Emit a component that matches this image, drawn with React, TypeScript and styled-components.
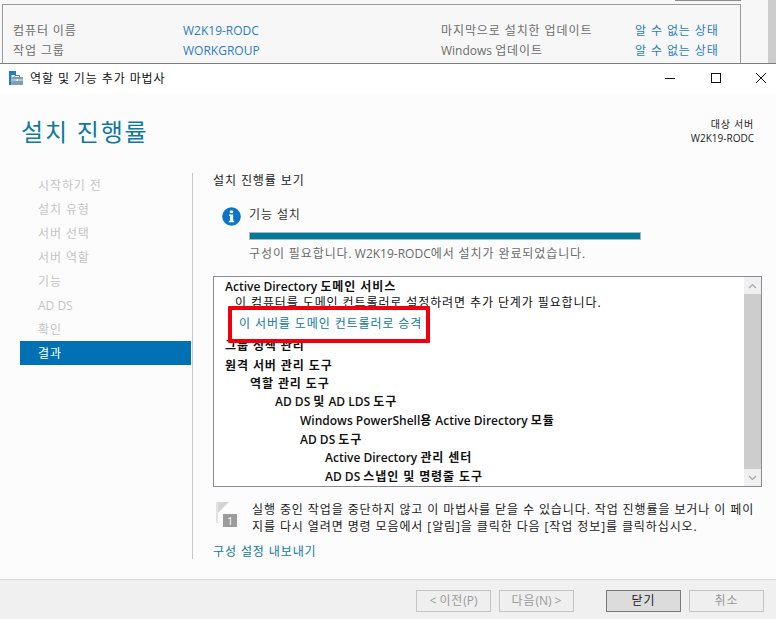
import styled, { createGlobalStyle } from 'styled-components'

const GlobalStyle = createGlobalStyle`
  html, body {
    margin: 0;
    padding: 0;
    background: #f7f7f7;
  }
  body {
    font-family: "Open Sans", "Noto Sans CJK KR", sans-serif;
    font-size: 12px;
    color: #1a1a1a;
  }
`

// hangul runs are set wider than the installed CJK font draws them
const Ko = styled.span`
  letter-spacing: 0.075em;
`

const T = ({ children }: { children: string }) => (
  <>
    {children.split(/([가-힣]+(?: [가-힣]+)*)/).map((part, i) =>
      i % 2 ? <Ko key={i}>{part}</Ko> : part,
    )}
  </>
)

const Page = styled.div`
  width: 776px;
  height: 619px;
  overflow: hidden;
  display: flex;
  flex-direction: column;
`

const Backdrop = styled.div`
  height: 63px;
  display: flex;
  background: #f7f7f7;
  border-bottom: 1px solid #7d7d7d;
  padding-left: 2px;
`

const BackdropPanel = styled.div`
  position: relative;
  width: 739px;
  margin-top: 4px;
  border: 1px solid #9a9a9a;
  border-bottom: none;
  display: grid;
  grid-template-columns: 170px 258px 194px 1fr;
  grid-auto-rows: 20px;
  padding: 16px 0 0 10px;
  box-sizing: border-box;

  &::before {
    content: '';
    position: absolute;
    top: -5px;
    right: -1px;
    width: 66px;
    height: 1px;
    background: #8c8c8c;
  }
`

const BackdropSpacer = styled.div`
  flex: 1;
`

const BackdropScroll = styled.div`
  width: 8px;
  background: #cdcdcd;
`

const InfoLabel = styled.span`
  color: #6d6d6d;
  line-height: 20px;
`

const InfoValue = styled.span`
  color: #2a7cc4;
  line-height: 20px;
`

const Wizard = styled.div`
  flex: 1;
  display: flex;
  flex-direction: column;
  background: #fcfcfc;
  min-height: 0;
`

const TitleBar = styled.div`
  height: 30px;
  box-sizing: border-box;
  padding: 0 0 2px 9px;
  background: #fff;
  display: flex;
  align-items: center;
`

const TitleText = styled.span`
  margin-left: 7px;
  color: #111;
  flex: 1;
`

const WindowControls = styled.div`
  display: flex;
  margin-right: -8px;
`

const WindowButton = styled.div`
  width: 45.5px;
  height: 28px;
  display: flex;
  align-items: center;
  justify-content: center;
`

const Header = styled.div`
  height: 79px;
  display: flex;
  justify-content: space-between;
  padding: 0 22px 0 21px;
`

const PageTitle = styled.h1`
  margin: 21px 0 0;
  font-size: 24px;
  font-weight: 400;
  line-height: 34px;
  color: #0f7a9e;
`

const Target = styled.div`
  margin-top: 23px;
  text-align: right;
  font-size: 10px;
  line-height: 14px;
  color: #222;
`

const Body = styled.div`
  flex: 1;
  display: flex;
  padding-left: 20px;
  min-height: 0;
`

const Nav = styled.nav`
  width: 172px;
  padding-right: 1px;
  box-sizing: border-box;
  margin-bottom: 20px;
  flex-shrink: 0;
`

const NavItem = styled.div<{ $active?: boolean }>`
  height: 24px;
  line-height: 26px;
  padding-left: 18px;
  color: ${p => (p.$active ? '#fff' : '#c4c4c4')};
  background: ${p => (p.$active ? '#0072b4' : 'transparent')};
`

const Content = styled.div`
  flex: 1;
  margin-bottom: 20px;
  border-left: 1px solid #c8c8c8;
  padding: 0 15px 0 20px;
  display: flex;
  flex-direction: column;
`

const SectionLabel = styled.div`
  line-height: 16px;
  color: #222;
`

const StatusRow = styled.div`
  margin: 16px 0 0 9px;
  display: flex;
  align-items: flex-start;
  gap: 8px;

  > svg {
    margin-top: 2px;
    flex-shrink: 0;
  }
`

const StatusBody = styled.div`
  width: 392px;
`

const StatusTitle = styled.div`
  padding-top: 1px;
  line-height: 17px;
  color: #333;
`

const ProgressTrack = styled.div`
  margin-top: 9px;
  height: 8px;
  box-sizing: border-box;
  border: 1px solid #b4b4b4;
  background: #007a99;
`

const StatusNote = styled.div`
  margin-top: 5px;
  line-height: 18px;
  color: #6a6a6a;
  white-space: nowrap;
`

const ListBox = styled.div`
  position: relative;
  margin-top: 13px;
  height: 211px;
  box-sizing: border-box;
  border: 1px solid #8a8a94;
  background: #fff;
  display: flex;
`

const ListRows = styled.div`
  flex: 1;
  min-width: 0;
  padding: 1px 0 0 11px;
  overflow: hidden;
`

const ListRow = styled.div<{ $level: number; $bold?: boolean; $height: number }>`
  height: ${p => p.$height}px;
  line-height: ${p => p.$height}px;
  padding-left: ${p => p.$level * 25}px;
  font-weight: ${p => (p.$bold ? 600 : 400)};
  color: #111;
  white-space: nowrap;
`

const LinkRow = styled(ListRow)`
  color: #0f7a9e;
  font-weight: 400;
  padding-left: 14px;
`

const Callout = styled.div`
  position: absolute;
  left: 14px;
  top: 29px;
  width: 202px;
  height: 37px;
  box-sizing: border-box;
  border: 4px solid #f0000c;
  border-radius: 1px;
`

const ScrollBar = styled.div`
  width: 17px;
  flex-shrink: 0;
  display: flex;
  flex-direction: column;
  background: #cdcdcd;
`

const ScrollArrow = styled.div`
  height: 17px;
  background: #f0f0f0;
  display: flex;
  align-items: center;
  justify-content: center;
`

const ScrollThumb = styled.div`
  flex: 1;
`

const NoticeRow = styled.div`
  margin: 14px 0 0 3px;
  display: flex;
  gap: 14px;

  > svg {
    flex-shrink: 0;
  }
`

const NoticeText = styled.p`
  margin: 0;
  width: 510px;
  line-height: 17px;
  letter-spacing: 0.075em;
  color: #1a1a1a;
`

const ExportLink = styled.div`
  margin-top: 8px;
  line-height: 18px;
  color: #0f7a9e;
`

const Footer = styled.div`
  height: 40px;
  box-sizing: border-box;
  background: #f0f0f0;
  border-top: 1px solid #d9d9d9;
  display: flex;
  align-items: flex-start;
  padding: 10px 0 0 416px;
`

const Button = styled.div<{ $primary?: boolean; $gap?: number }>`
  width: 75px;
  height: 22px;
  line-height: 20px;
  text-align: center;
  box-sizing: border-box;
  margin-right: ${p => p.$gap ?? 8}px;
  border: 1px solid ${p => (p.$primary ? '#7a7a7a' : '#c4c4c4')};
  background: ${p => (p.$primary ? '#dcdcdc' : '#efefef')};
  color: ${p => (p.$primary ? '#222' : '#9a9a9a')};
`

const rows = [
  { text: '그룹 정책 관리', level: 0, height: 20 },
  { text: '원격 서버 관리 도구', level: 0, height: 19 },
  { text: '역할 관리 도구', level: 1, height: 18 },
  { text: 'AD DS 및 AD LDS 도구', level: 2, height: 18 },
  { text: 'Windows PowerShell용 Active Directory 모듈', level: 3, height: 19 },
  { text: 'AD DS 도구', level: 3, height: 19 },
  { text: 'Active Directory 관리 센터', level: 4, height: 18 },
  { text: 'AD DS 스냅인 및 명령줄 도구', level: 4, height: 20 },
]

const steps = ['시작하기 전', '설치 유형', '서버 선택', '서버 역할', '기능', 'AD DS', '확인']

const WizardIcon = () => (
  <svg width="14" height="14" viewBox="0 0 14 14">
    <rect x="0" y="0" width="7" height="4" fill="#1d7fc9" />
    <rect x="0" y="4" width="2.5" height="10" fill="#1d7fc9" />
    <path d="M2.5 6H14v8H2.5z" fill="#7f9fb3" />
    <path d="M6 6V4.5h4.5V6" fill="none" stroke="#5f7f93" strokeWidth="1" />
    <rect x="2.5" y="8.5" width="11.5" height="1" fill="#dfe8ee" />
    <rect x="7.5" y="8" width="1.5" height="2" fill="#fff" />
  </svg>
)

const InfoIcon = () => (
  <svg width="19" height="19" viewBox="0 0 20 20">
    <circle cx="10" cy="10" r="9.8" fill="#0a74c9" />
    <rect x="8.3" y="3.6" width="3.4" height="3" rx="1" fill="#fff" />
    <path d="M7.4 8h4.3v6.6h1.2V16H7.2v-1.4h1.3V9.4H7.4z" fill="#fff" />
  </svg>
)

const FlagIcon = () => (
  <svg width="22" height="26" viewBox="0 0 22 26">
    <rect x="0" y="1" width="2" height="21" fill="#e2e2e2" />
    <path d="M2 1h11L2 12z" fill="#d4d4d4" />
    <rect x="7" y="13" width="14" height="13" fill="#9c9c9c" />
    <text x="14" y="24" textAnchor="middle" fontSize="10" fill="#fff" fontFamily="Open Sans, sans-serif">1</text>
  </svg>
)

const Chevron = ({ up }: { up?: boolean }) => (
  <svg width="9" height="6" viewBox="0 0 9 6">
    <path d={up ? 'M1 5l3.5-3.5L8 5' : 'M1 1l3.5 3.5L8 1'} fill="none" stroke="#a6a6a6" strokeWidth="1.2" />
  </svg>
)

export default function App() {
  return (
    <Page>
      <GlobalStyle />
      <Backdrop>
        <BackdropPanel>
          <InfoLabel><T>컴퓨터 이름</T></InfoLabel>
          <InfoValue>W2K19-RODC</InfoValue>
          <InfoLabel><T>마지막으로 설치한 업데이트</T></InfoLabel>
          <InfoValue><T>알 수 없는 상태</T></InfoValue>
          <InfoLabel><T>작업 그룹</T></InfoLabel>
          <InfoValue>WORKGROUP</InfoValue>
          <InfoLabel><T>Windows 업데이트</T></InfoLabel>
          <InfoValue><T>알 수 없는 상태</T></InfoValue>
        </BackdropPanel>
        <BackdropSpacer />
        <BackdropScroll />
      </Backdrop>
      <Wizard>
        <TitleBar>
          <WizardIcon />
          <TitleText><T>역할 및 기능 추가 마법사</T></TitleText>
          <WindowControls>
            <WindowButton>
              <svg width="10" height="10" viewBox="0 0 10 10">
                <path d="M0 5.5h10" stroke="#111" />
              </svg>
            </WindowButton>
            <WindowButton>
              <svg width="10" height="10" viewBox="0 0 10 10">
                <rect x="0.5" y="0.5" width="9" height="9" fill="none" stroke="#111" />
              </svg>
            </WindowButton>
            <WindowButton>
              <svg width="10" height="10" viewBox="0 0 10 10">
                <path d="M0 0l10 10M10 0L0 10" stroke="#111" />
              </svg>
            </WindowButton>
          </WindowControls>
        </TitleBar>
        <Header>
          <PageTitle><T>설치 진행률</T></PageTitle>
          <Target>
            <T>대상 서버</T>
            <br />
            W2K19-RODC
          </Target>
        </Header>
        <Body>
          <Nav>
            {steps.map(step => (
              <NavItem key={step}><T>{step}</T></NavItem>
            ))}
            <NavItem $active><T>결과</T></NavItem>
          </Nav>
          <Content>
            <SectionLabel><T>설치 진행률 보기</T></SectionLabel>
            <StatusRow>
              <InfoIcon />
              <StatusBody>
                <StatusTitle><T>기능 설치</T></StatusTitle>
                <ProgressTrack />
                <StatusNote><T>구성이 필요합니다. W2K19-RODC에서 설치가 완료되었습니다.</T></StatusNote>
              </StatusBody>
            </StatusRow>
            <ListBox>
              <ListRows>
                <ListRow $level={0} $bold $height={17}><T>Active Directory 도메인 서비스</T></ListRow>
                <ListRow $level={0.4} $height={16}><T>이 컴퓨터를 도메인 컨트롤러로 설정하려면 추가 단계가 필요합니다.</T></ListRow>
                <LinkRow $level={0} $height={25}><T>이 서버를 도메인 컨트롤러로 승격</T></LinkRow>
                {rows.map(row => (
                  <ListRow key={row.text} $level={row.level} $bold $height={row.height}><T>{row.text}</T></ListRow>
                ))}
              </ListRows>
              <ScrollBar>
                <ScrollArrow><Chevron up /></ScrollArrow>
                <ScrollThumb />
                <ScrollArrow><Chevron /></ScrollArrow>
              </ScrollBar>
              <Callout />
            </ListBox>
            <NoticeRow>
              <FlagIcon />
              <NoticeText>
                실행 중인 작업을 중단하지 않고 이 마법사를 닫을 수 있습니다. 작업 진행률을 보거나 이 페이지를 다시 열려면 명령 모음에서 [알림]을 클릭한 다음 [작업 정보]를 클릭하십시오.
              </NoticeText>
            </NoticeRow>
            <ExportLink><T>구성 설정 내보내기</T></ExportLink>
          </Content>
        </Body>
        <Footer>
          <Button><T>&lt; 이전(P)</T></Button>
          <Button $gap={32}><T>다음(N) &gt;</T></Button>
          <Button $primary><T>닫기</T></Button>
          <Button><T>취소</T></Button>
        </Footer>
      </Wizard>
    </Page>
  )
}
